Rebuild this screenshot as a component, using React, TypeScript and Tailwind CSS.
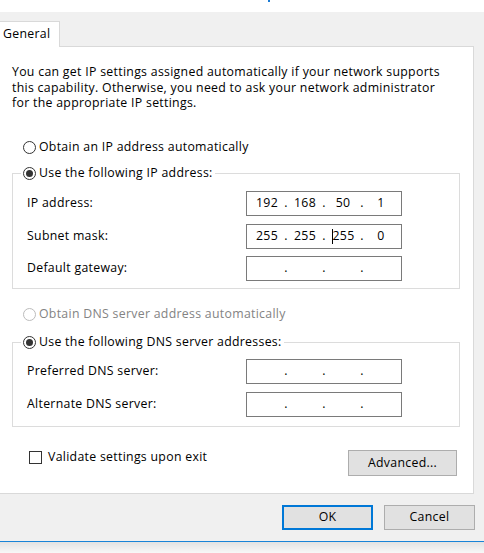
import React from "react";

type RadioProps = {
  checked?: boolean;
  disabled?: boolean;
  label: string;
};

const Radio: React.FC<RadioProps> = ({ checked, disabled, label }) => (
  <div className={`flex items-center gap-[3px] h-[16px] ${disabled ? "text-[#838383]" : "text-black"}`}>
    <span
      className={`w-[13px] h-[13px] rounded-full border bg-white flex items-center justify-center ${
        disabled ? "border-[#bcbcbc]" : "border-[#333333]"
      }`}
    >
      {checked && <span className="w-[7px] h-[7px] rounded-full bg-[#333333]" />}
    </span>
    <span className="whitespace-nowrap">{label}</span>
  </div>
);

type IpProps = {
  parts?: string[];
  caretAt?: number;
};

const IpInput: React.FC<IpProps> = ({ parts = ["", "", "", ""], caretAt }) => (
  <div className="w-[156px] h-[25px] border border-[#7a7a7a] bg-white flex items-center pl-[3px]">
    {parts.map((p, i) => (
      <React.Fragment key={i}>
        <span className="w-[34px] flex items-center justify-center">
          {caretAt === i && <span className="w-[1px] h-[15px] bg-black" />}
          {p}
        </span>
        {i < 3 && <span className="w-[4px] text-center">.</span>}
      </React.Fragment>
    ))}
  </div>
);

type Row = { label: string; parts?: string[]; caretAt?: number };

const GroupBox: React.FC<{ legend: string; rows: Row[]; pt: string; pb: string; gap: string; mt: string }> = ({
  legend,
  rows,
  pt,
  pb,
  gap,
  mt,
}) => (
  <fieldset className={`ml-[12px] w-[448px] border border-[#dcdcdc] pl-[14px] ${mt}`}>
    <legend className="ml-[-6px] px-[2px]">
      <Radio checked label={legend} />
    </legend>
    <div className={`grid grid-cols-[219px_156px] items-center ${pt} ${pb} ${gap}`}>
      {rows.map((r) => (
        <React.Fragment key={r.label}>
          <span>{r.label}</span>
          <IpInput parts={r.parts} caretAt={r.caretAt} />
        </React.Fragment>
      ))}
    </div>
  </fieldset>
);

export default function App() {
  return (
    <div className="w-[484px] h-[553px] flex flex-col font-['Open_Sans',Arial,sans-serif] text-[12.3px] tracking-[0.3px] text-black overflow-hidden">
      {/* strip above the dialog */}
      <div className="h-[12px] bg-white pl-[268px]">
        <div className="w-[2px] h-[2px] bg-[#1c7cd5]" />
      </div>

      <div className="h-[529px] bg-[#f0f0f0] pt-[9px] pr-[10px] flex flex-col">
        {/* Tab */}
        <div className="relative z-10 w-[60px] h-[26px] mb-[-1px] bg-white border-t border-r border-[#d9d9d9] flex items-center pl-[3px]">
          General
        </div>

        {/* Tab page */}
        <div className="h-[448px] bg-white border-t border-r border-b border-[#d9d9d9] flex flex-col">
          <p className="mt-[17px] pl-[12px] leading-[15.5px]">
            You can get IP settings assigned automatically if your network supports
            <br />
            this capability. Otherwise, you need to ask your network administrator
            <br />
            for the appropriate IP settings.
          </p>

          <div className="mt-[28.5px] pl-[23px]">
            <Radio label="Obtain an IP address automatically" />
          </div>

          <GroupBox
            mt="mt-[10px]"
            pt="pt-[10px]"
            pb="pb-[7px]"
            gap="gap-y-[7.5px]"
            legend="Use the following IP address:"
            rows={[
              { label: "IP address:", parts: ["192", "168", "50", "1"] },
              { label: "Subnet mask:", parts: ["255", "255", "255", "0"], caretAt: 2 },
              { label: "Default gateway:" },
            ]}
          />

          <div className="mt-[17px] pl-[23px]">
            <Radio disabled label="Obtain DNS server address automatically" />
          </div>

          <GroupBox
            mt="mt-[12px]"
            pt="pt-[9px]"
            pb="pb-[9px]"
            gap="gap-y-[8px]"
            legend="Use the following DNS server addresses:"
            rows={[{ label: "Preferred DNS server:" }, { label: "Alternate DNS server:" }]}
          />

          <div className="mt-[22px] flex items-start justify-between pl-[29px] pr-[16px]">
            <label className="flex items-center gap-[6px] h-[16px]">
              <span className="w-[13px] h-[13px] border border-[#333333] bg-white" />
              Validate settings upon exit
            </label>
            <button className="mt-[1px] w-[109px] h-[26px] bg-[#e1e1e1] border border-[#adadad]">
              Advanced...
            </button>
          </div>
        </div>

        {/* Dialog buttons */}
        <div className="mt-[11px] mr-[-1px] flex justify-end gap-[11px]">
          <button className="w-[91px] h-[25px] bg-[#e1e1e1] border-2 border-[#0078d7]">OK</button>
          <button className="w-[91px] h-[25px] bg-[#e1e1e1] border border-[#adadad]">Cancel</button>
        </div>
      </div>

      <div className="h-[1px] bg-[#1883d7]" />
      <div className="flex-1 bg-gradient-to-b from-[#e2e2e2] to-[#f8f8f8]" />
    </div>
  );
}
